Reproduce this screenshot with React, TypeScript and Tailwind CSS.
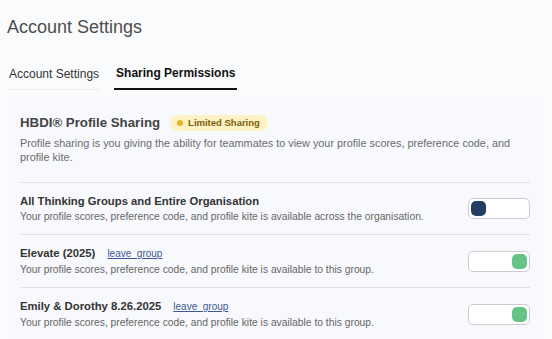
import React, { useState } from "react";

interface Group {
    id: number;
    name: string;
    description: string;
    canLeave: boolean;
    enabled: boolean;
}

const initialGroups: Group[] = [
    {
        id: 1,
        name: "All Thinking Groups and Entire Organisation",
        description:
            "Your profile scores, preference code, and profile kite is available across the organisation.",
        canLeave: false,
        enabled: false,
    },
    {
        id: 2,
        name: "Elevate (2025)",
        description: "Your profile scores, preference code, and profile kite is available to this group.",
        canLeave: true,
        enabled: true,
    },
    {
        id: 3,
        name: "Emily & Dorothy 8.26.2025",
        description: "Your profile scores, preference code, and profile kite is available to this group.",
        canLeave: true,
        enabled: true,
    },
];

function Toggle({ on, onClick }: { on: boolean; onClick: () => void }) {
    return (
        <button
            type="button"
            onClick={onClick}
            className={
                "flex h-[21px] w-[62px] shrink-0 items-center rounded-[5px] border border-[#cdcdcd] bg-white px-[2px] " +
                (on ? "justify-end" : "justify-start")
            }
        >
            <span className={"block h-[15px] w-[15px] rounded-[5px] " + (on ? "bg-[#66c386]" : "bg-[#243d63]")} />
        </button>
    );
}

export default function App() {
    const [groups, setGroups] = useState<Group[]>(initialGroups);
    const [tab, setTab] = useState("sharing");

    const toggle = (id: number) => {
        setGroups(groups.map((g) => (g.id === id ? { ...g, enabled: !g.enabled } : g)));
    };

    return (
        <div className="min-h-screen bg-[#fafbfc] font-['Liberation_Sans',Arial,sans-serif]">
            <h1 className="px-[7px] pt-[15px] text-[18px] leading-6 text-[#4d4d4d]">Account Settings</h1>

            <div className="mt-[26px] flex gap-[14px] px-2">
                <button
                    type="button"
                    onClick={() => setTab("account")}
                    className={
                        "px-px pb-[7px] text-[12px] leading-4 " +
                        (tab === "account"
                            ? "border-b-2 border-[#111] font-bold text-[#111]"
                            : "border-b border-[#ececec] text-[#333]")
                    }
                >
                    Account Settings
                </button>
                <button
                    type="button"
                    onClick={() => setTab("sharing")}
                    className={
                        "px-[2px] pb-[7px] text-[12px] leading-4 " +
                        (tab === "sharing"
                            ? "border-b-2 border-[#111] font-bold text-[#111]"
                            : "border-b border-[#ececec] text-[#333]")
                    }
                >
                    Sharing Permissions
                </button>
            </div>

            <div className="ml-2 mr-[10px] mt-2 bg-[#f8f9fc] px-3">
                <div className="border-b border-[#e2e2e2] pb-[18px] pt-[15px]">
                    <div className="flex items-center gap-[10px]">
                        <h2 className="text-[13.25px] font-bold leading-5 text-[#444]">HBDI® Profile Sharing</h2>
                        <span className="flex h-4 items-center gap-[5px] rounded-full bg-[#fdf2c4] pl-[7px] pr-2 text-[9.5px] font-bold text-[#7b5e0c]">
                            <span className="h-[6px] w-[6px] rounded-full bg-[#e8b625]" />
                            Limited Sharing
                        </span>
                    </div>
                    <p className="mt-[3px] text-[10.85px] leading-[14px] text-[#6b6b6b]">
                        Profile sharing is you giving the ability for teammates to view your profile scores, preference
                        code, and profile kite.
                    </p>
                </div>

                {groups.map((g, i) => (
                    <div
                        key={g.id}
                        className={
                            "flex items-center justify-between pb-[10px] pt-[10px] " +
                            (i < groups.length - 1 ? "border-b border-[#e2e2e2]" : "")
                        }
                    >
                        <div>
                            <div className="flex items-baseline gap-3">
                                <span className="text-[11.3px] font-bold leading-4 text-[#333]">{g.name}</span>
                                {g.canLeave && (
                                    <a href="#" className="text-[10px] leading-4 text-[#3d5a96] underline">
                                        leave_group
                                    </a>
                                )}
                            </div>
                            <p className="text-[10.3px] leading-[15px] text-[#666]">{g.description}</p>
                        </div>
                        <Toggle on={g.enabled} onClick={() => toggle(g.id)} />
                    </div>
                ))}
            </div>
        </div>
    );
}
